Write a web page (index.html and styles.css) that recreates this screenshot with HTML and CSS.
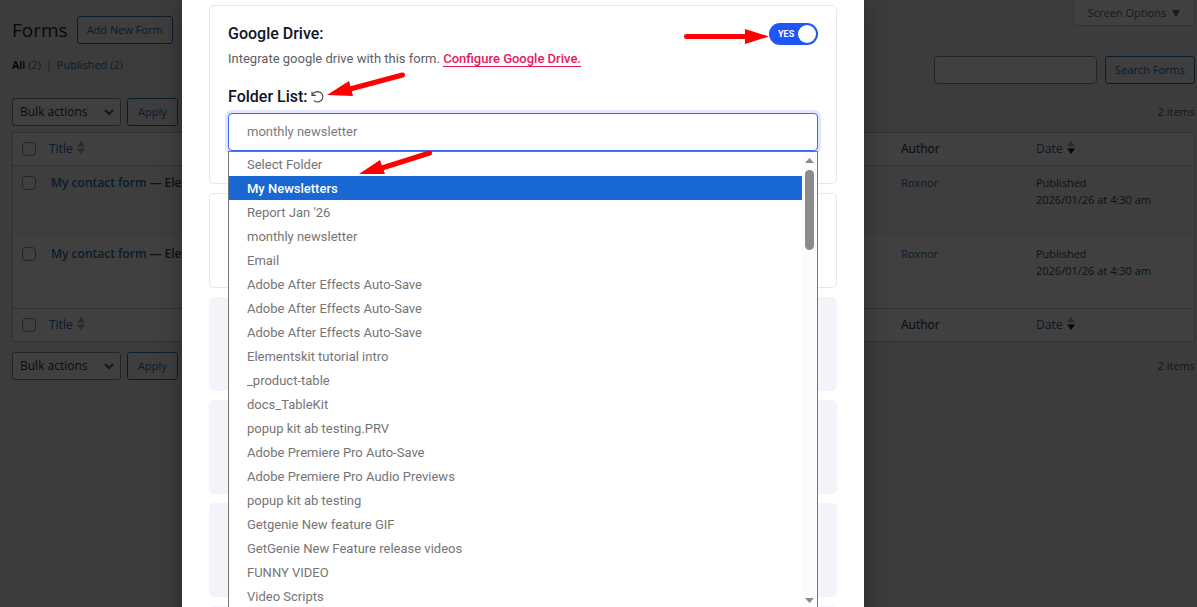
FILE: index.html
```html
<!DOCTYPE html>
<html lang="en">
<head>
<meta charset="utf-8">
<title>Forms</title>
<link rel="stylesheet" href="styles.css">
</head>
<body>
<main class="admin">
  <header class="admin-head">
    <div class="heading">
      <h1>Forms</h1>
      <button class="btn" type="button">Add New Form</button>
    </div>
    <button class="screen-options" type="button">Screen Options <svg width="8" height="7" viewBox="0 0 8 7"><path d="M0 0h8L4 7z" fill="currentColor"/></svg></button>
  </header>

  <div class="filters">
    <p class="views"><a class="current" href="#all">All</a> (2) <span class="bar">|</span> <a href="#published">Published</a> (2)</p>
    <form class="search">
      <input type="search" aria-label="Search forms">
      <button class="btn" type="button">Search Forms</button>
    </form>
  </div>

  <div class="tablenav">
    <select class="bulk" aria-label="Bulk actions"><option>Bulk actions</option></select>
    <button class="btn" type="button">Apply</button>
    <span class="count">2 items</span>
  </div>

  <table class="forms">
    <thead>
      <tr>
        <th class="check"><input type="checkbox" aria-label="Select all"></th>
        <th><a class="sort" href="#title">Title <svg width="8" height="13" viewBox="0 0 8 13"><path d="M0 5.500L4 0l4 5.500zM0 7.500h8L4 13z" fill="#a7aaad"/></svg></a></th>
        <th class="author">Author</th>
        <th class="date"><a class="sort" href="#date">Date <svg width="8" height="13" viewBox="0 0 8 13"><path d="M0 5.500L4 0l4 5.500z" fill="#a7aaad"/><path d="M0 7.500h8L4 13z" fill="#1d2327"/></svg></a></th>
      </tr>
    </thead>
    <tbody>
      <tr>
        <td class="check"><input type="checkbox" aria-label="Select first form"></td>
        <td class="name"><a href="#form-1">My contact form</a> — Elementor</td>
        <td><a href="#author">Roxnor</a></td>
        <td class="date">Published<br>2026/01/26 at 4:30 am</td>
      </tr>
      <tr>
        <td class="check"><input type="checkbox" aria-label="Select second form"></td>
        <td class="name"><a href="#form-2">My contact form</a> — Elementor</td>
        <td><a href="#author">Roxnor</a></td>
        <td class="date">Published<br>2026/01/26 at 4:30 am</td>
      </tr>
    </tbody>
    <tfoot>
      <tr>
        <th class="check"><input type="checkbox" aria-label="Select all, bottom"></th>
        <th><a class="sort" href="#title">Title <svg width="8" height="13" viewBox="0 0 8 13"><path d="M0 5.500L4 0l4 5.500zM0 7.500h8L4 13z" fill="#a7aaad"/></svg></a></th>
        <th class="author">Author</th>
        <th class="date"><a class="sort" href="#date">Date <svg width="8" height="13" viewBox="0 0 8 13"><path d="M0 5.500L4 0l4 5.500z" fill="#a7aaad"/><path d="M0 7.500h8L4 13z" fill="#1d2327"/></svg></a></th>
      </tr>
    </tfoot>
  </table>

  <div class="tablenav bottom">
    <select class="bulk" aria-label="Bulk actions, bottom"><option>Bulk actions</option></select>
    <button class="btn" type="button">Apply</button>
    <span class="count">2 items</span>
  </div>
</main>

<div class="overlay">
  <section class="modal" role="dialog" aria-label="Form settings">
    <div class="card drive">
      <div class="drive-head">
        <h2>Google Drive:</h2>
        <label class="toggle"><input type="checkbox" checked aria-label="Google Drive"><span>YES</span></label>
      </div>
      <p class="hint">Integrate google drive with this form. <a href="#configure">Configure Google Drive.</a></p>
      <div class="list-head">
        <label for="folder">Folder List:</label>
        <button class="refresh" type="button" aria-label="Refresh folders">
          <svg width="14" height="14" viewBox="0 0 14 14" fill="none" stroke="#45484f" stroke-width="1.200" stroke-linecap="round" stroke-linejoin="round"><path d="M1 2v3.400h3.400"/><path d="M1.300 5.200C2.300 2.900 4.500 1.600 7 1.600a5.200 5.200 0 1 1-3.800 9"/></svg>
        </button>
      </div>
      <div class="field">
        <select id="folder" class="folder"><option>monthly newsletter</option></select>
        <div class="dropdown">
          <ul role="listbox" aria-label="Folders">
            <li role="option">Select Folder</li>
            <li role="option" class="active" aria-selected="true">My Newsletters</li>
            <li role="option">Report Jan '26</li>
            <li role="option">monthly newsletter</li>
            <li role="option">Email</li>
            <li role="option">Adobe After Effects Auto-Save</li>
            <li role="option">Adobe After Effects Auto-Save</li>
            <li role="option">Adobe After Effects Auto-Save</li>
            <li role="option">Elementskit tutorial intro</li>
            <li role="option">_product-table</li>
            <li role="option">docs_TableKit</li>
            <li role="option">popup kit ab testing.PRV</li>
            <li role="option">Adobe Premiere Pro Auto-Save</li>
            <li role="option">Adobe Premiere Pro Audio Previews</li>
            <li role="option">popup kit ab testing</li>
            <li role="option">Getgenie New feature GIF</li>
            <li role="option">GetGenie New Feature release videos</li>
            <li role="option">FUNNY VIDEO</li>
            <li role="option">Video Scripts</li>
          </ul>
          <div class="scrollbar">
            <svg width="9" height="5" viewBox="0 0 9 5"><path d="M0 5L4.500 0 9 5z" fill="#8b8b8b"/></svg>
            <span class="thumb"></span>
            <svg class="down" width="9" height="5" viewBox="0 0 9 5"><path d="M0 0h9L4.500 5z" fill="#8b8b8b"/></svg>
          </div>
        </div>
      </div>
    </div>
    <div class="card"></div>
    <div class="card locked"></div>
    <div class="card locked"></div>
    <div class="card locked"></div>
    <div class="card locked"></div>
  </section>
</div>

<svg class="arrows" width="1197" height="607" viewBox="0 0 1197 607" fill="#f00" stroke="#f00" stroke-width="5" stroke-linecap="round" aria-hidden="true">
  <path d="M686.500 36.500H746"/><path d="M745 29l24 7.500-24 7.500z" stroke="none"/>
  <path d="M402.500 75L350 89"/><path d="M327 95l22-14 4 15z" stroke="none"/>
  <path d="M429.500 153L382 168"/><path d="M359 174l21-14 5 14z" stroke="none"/>
</svg>
</body>
</html>
```
FILE: styles.css
```css
* { box-sizing: border-box; }

body {
  margin: 0;
  height: 100vh;
  overflow: hidden;
  position: relative;
  background: #f0f0f1;
  color: #3c434a;
  font: 11px/18px "Segoe UI", "Open Sans", sans-serif;
}

h1, h2, p, ul { margin: 0; padding: 0; }
a { color: #2271b1; text-decoration: none; }
button, input, select { font: inherit; margin: 0; }

/* Admin list behind the dialog */
.admin { padding: 0 2px 0 12px; }

.admin-head {
  display: flex;
  justify-content: space-between;
  align-items: flex-start;
}
.heading { display: flex; align-items: center; gap: 9px; padding-top: 16px; }
h1 { color: #1d2327; font-size: 19px; font-weight: 400; line-height: 28px; }

.btn {
  height: 28px;
  padding: 0 9px;
  border: 1px solid #2271b1;
  border-radius: 3px;
  background: #f6f7f7;
  color: #2271b1;
  white-space: nowrap;
}
.screen-options {
  height: 26px;
  padding: 0 14px;
  border: 1px solid #c3c4c7;
  border-top: 0;
  border-radius: 0 0 4px 4px;
  background: #fff;
  color: #646970;
}
.screen-options svg { margin-left: 3px; }

.filters { display: flex; justify-content: space-between; align-items: flex-start; padding-top: 12px; }
.views { color: #646970; }
.views .current { color: #000; font-weight: 600; }
.views .bar { margin: 0 2px; }
.search { display: flex; gap: 8px; }
.search input {
  width: 163px;
  height: 28px;
  border: 1px solid #8c8f94;
  border-radius: 4px;
  background: #fff;
}

.tablenav { display: flex; gap: 6px; align-items: center; padding: 14px 0 6px; }
.tablenav.bottom { padding-top: 10px; }
.bulk {
  width: 109px;
  height: 28px;
  padding: 0 7px;
  border: 1px solid #8c8f94;
  border-radius: 3px;
  color: #2c3338;
  font-size: 12px;
  appearance: none;
  background: #fff url("data:image/svg+xml,%3Csvg xmlns='http://www.w3.org/2000/svg' width='10' height='7' fill='none' stroke='%23555' stroke-width='2'%3E%3Cpath d='M1 1l4 4 4-4'/%3E%3C/svg%3E") no-repeat right 6px center;
}
.tablenav .btn { padding: 0 10px; }
.count { margin-left: auto; color: #50575e; }

.forms {
  width: 100%;
  border: 1px solid #c3c4c7;
  border-spacing: 0;
  background: #fff;
  table-layout: fixed;
}
.forms th { height: 33px; padding: 0 8px; text-align: left; font-size: 12px; font-weight: 400; color: #1d2327; }
.forms td { height: 71px; padding: 8px; vertical-align: top; line-height: 17px; }
.forms thead th { border-bottom: 1px solid #c3c4c7; }
.forms tfoot th { border-top: 1px solid #c3c4c7; }
.forms tbody tr:first-child { background: #f6f7f7; }
.forms .check { width: 28px; padding-left: 9px; padding-right: 0; }
.forms .author { width: 135px; }
.forms .date { width: 166px; }
.forms .name { padding-left: 10px; font-size: 12px; font-weight: 600; }
.sort svg { margin-left: 1px; vertical-align: -1px; }
.forms input {
  display: block;
  width: 14px;
  height: 14px;
  border: 1px solid #8c8f94;
  border-radius: 4px;
  background: #fff;
  appearance: none;
}
.forms td input { margin-top: 2px; }

/* Dialog */
.overlay {
  position: absolute;
  inset: 0;
  overflow: hidden;
  padding: 0 333px 0 182px;
  background: rgba(0, 0, 0, .75);
  font-family: Roboto, sans-serif;
  font-size: 13px;
}
.modal {
  display: flex;
  flex-direction: column;
  gap: 9px;
  min-height: 100%;
  padding: 5px 27px;
  background: #fff;
  box-shadow: 0 0 24px rgba(0, 0, 0, .3);
}
.card { min-height: 95px; border: 1px solid #e6e7ea; border-radius: 5px; }
.card.locked { min-height: 94px; border-color: #f3f4f9; background: #f3f4f9; }
.drive { padding: 17px 18px 32px; }
.drive-head { display: flex; justify-content: space-between; align-items: center; }
h2, .list-head label { color: #0d1427; font-size: 16px; font-weight: 500; line-height: 22px; }

.toggle {
  display: flex;
  align-items: center;
  position: relative;
  width: 49px;
  height: 22px;
  padding-left: 9px;
  border-radius: 11px;
  background: #2055f7;
  color: #fff;
  font-size: 9px;
  font-weight: 700;
}
.toggle input { position: absolute; inset: 0; opacity: 0; }
.toggle::after {
  content: "";
  width: 18px;
  height: 18px;
  margin: 0 2px 0 auto;
  border-radius: 50%;
  background: #fff;
}

.hint { padding-top: 5px; color: #5d5e64; }
.hint a { border-bottom: 1px solid #e8175d; color: #e8175d; font-weight: 500; }
.list-head { display: flex; align-items: center; gap: 3px; padding: 18px 0 5px; }
.refresh { display: flex; padding: 0; border: 0; background: none; }

.field { position: relative; }
.folder {
  display: block;
  width: 100%;
  height: 38px;
  padding: 0 18px;
  border: 1px solid #3a66f5;
  border-radius: 4px;
  background: #fff;
  box-shadow: 0 0 0 3px #e0e6fd;
  color: #7b7b7b;
  appearance: none;
}
.dropdown {
  position: absolute;
  top: 100%;
  left: 0;
  right: 0;
  display: flex;
  border: 1px solid #767676;
  border-bottom: 0;
  background: #fff;
}
.dropdown ul { flex: 1; list-style: none; }
.dropdown li { padding: 2px 18px 0; color: #757575; line-height: 22px; }
.dropdown .active { background: #1967d2; color: #fff; font-weight: 500; }
.scrollbar {
  display: flex;
  flex-direction: column;
  align-items: center;
  gap: 7px;
  width: 15px;
  padding: 6px 0 5px;
  background: #fcfcfc;
}
.thumb { width: 9px; height: 80px; border-radius: 5px; background: #8b8b8b; }
.scrollbar .down { margin-top: auto; }

.arrows { position: absolute; top: 0; left: 0; pointer-events: none; }
```
